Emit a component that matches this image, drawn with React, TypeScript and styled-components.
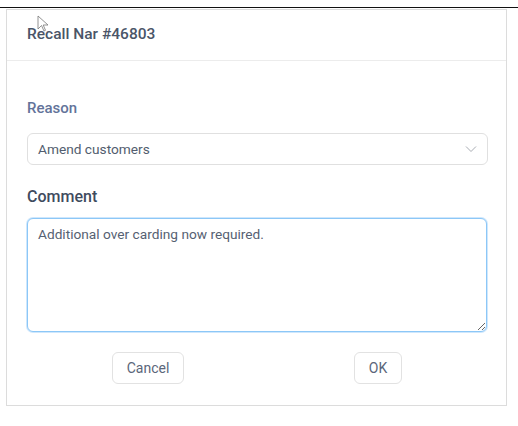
import React from "react";
import styled, { createGlobalStyle } from "styled-components";

const Global = createGlobalStyle`
  html, body { margin: 0; padding: 0; background: #fff; }
  body { font-family: Roboto, "Noto Sans", Arial, sans-serif; }
  * { box-sizing: border-box; }
`;

const Page = styled.div`
  position: relative;
  width: 518px;
  height: 426px;
  padding-top: 7px;
`;

const TopRule = styled.div`
  height: 1px;
  background: #111;
`;

const Dialog = styled.div`
  margin: 1px 0 0 6px;
  width: 501px;
  border: 1px solid #dcdcdc;
  background: #fff;
`;

const Header = styled.div`
  height: 51px;
  display: flex;
  align-items: center;
  padding: 0 20px 3px 20px;
  border-bottom: 1px solid #ececec;
`;

const Title = styled.h2`
  margin: 0;
  font-size: 15.5px;
  font-weight: 500;
  color: #4a5568;
`;

const Body = styled.div`
  padding: 37px 18px 21px 20px;
  display: flex;
  flex-direction: column;
`;

const Label = styled.label<{ $strong?: boolean }>`
  display: block;
  line-height: 20px;
  font-size: ${(p) => (p.$strong ? "16px" : "15px")};
  font-weight: 500;
  color: ${(p) => (p.$strong ? "#3f4b5e" : "#63739a")};
`;

const SelectBox = styled.div`
  margin-top: 15px;
  height: 32px;
  border: 1px solid #e0e0e0;
  border-radius: 6px;
  display: flex;
  align-items: center;
  justify-content: space-between;
  padding: 0 10px 0 10px;
  font-size: 13.7px;
  color: #525d6e;
`;

const Chevron = styled.svg`
  width: 12px;
  height: 8px;
`;

const CommentLabel = styled(Label)`
  margin-top: 22px;
`;

const TextArea = styled.textarea`
  margin-top: 11px;
  width: 460px;
  height: 114px;
  border: 1px solid #8cc7f7;
  box-shadow: 0 0 0 1px #cfe7fc;
  border-radius: 6px;
  padding: 7px 10px;
  font-family: Roboto, "Noto Sans", Arial, sans-serif;
  font-size: 13.7px;
  line-height: 16px;
  color: #566172;
  resize: both;
  outline: none;
`;

const Footer = styled.div`
  margin-top: 20px;
  display: grid;
  grid-template-columns: 230px 230px;
  padding-left: 6px;
`;

const FooterCell = styled.div`
  display: flex;
  justify-content: center;
`;

const Button = styled.button<{ $w: number }>`
  width: ${(p) => p.$w}px;
  height: 32px;
  border: 1px solid #e2e2e2;
  border-radius: 6px;
  background: #fff;
  font-family: Roboto, "Noto Sans", Arial, sans-serif;
  font-size: 14px;
  color: #5b667a;
  padding: 0;
`;

const Cursor = styled.svg`
  position: absolute;
  left: 37px;
  top: 15px;
  width: 14px;
  height: 18px;
`;

export default function App() {
  return (
    <>
      <Global />
      <Page>
        <TopRule />
        <Dialog>
          <Header>
            <Title>Recall Nar #46803</Title>
          </Header>
          <Body>
            <Label>Reason</Label>
            <SelectBox>
              <span>Amend customers</span>
              <Chevron viewBox="0 0 12 8">
                <polyline points="1,1.5 6,6.5 11,1.5" fill="none" stroke="#a8acb3" strokeWidth="1" />
              </Chevron>
            </SelectBox>
            <CommentLabel $strong>Comment</CommentLabel>
            <TextArea defaultValue="Additional over carding now required." />
            <Footer>
              <FooterCell>
                <Button $w={72}>Cancel</Button>
              </FooterCell>
              <FooterCell>
                <Button $w={48}>OK</Button>
              </FooterCell>
            </Footer>
          </Body>
        </Dialog>
        <Cursor viewBox="0 0 14 18">
          <path d="M1 1 L1 14 L4.5 10.5 L7 16 L8.5 15.3 L6.2 10 L11 10 Z" fill="#fff" stroke="#777" strokeWidth="0.8" />
        </Cursor>
      </Page>
    </>
  );
}
